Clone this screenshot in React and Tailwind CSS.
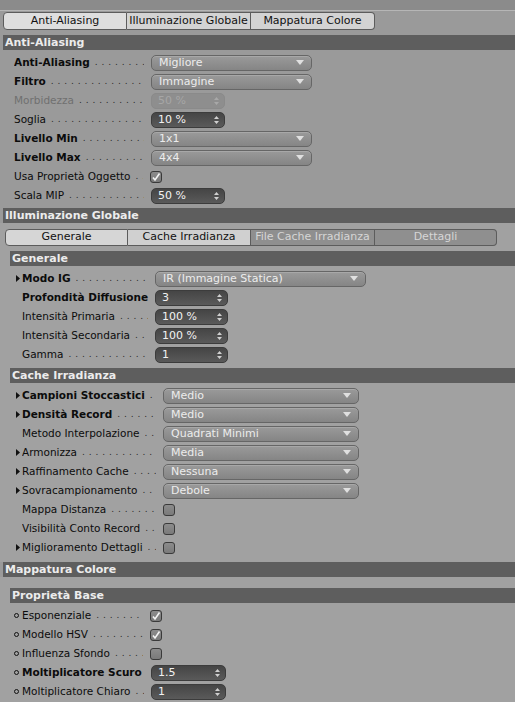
import React from "react";

const DOTS = ". . . . . . . . . . . . . . . . . . . . . . . . . . . . . . . . . . . . . . .";

function Header({ title, indent }) {
  return (
    <div
      className={
        "h-[15px] bg-[#5e5e5e] text-[#ececec] font-bold text-[11px] leading-[15px] pl-[2px] " +
        (indent ? "ml-[10px]" : "ml-[3px]")
      }
    >
      {title}
    </div>
  );
}

function Marker({ type }) {
  if (type === "tri") {
    return (
      <span className="w-[8px] flex items-center justify-start pl-[2px]">
        <svg width="4" height="7" viewBox="0 0 4 7">
          <path d="M0 0 L4 3.5 L0 7 Z" fill="#111" />
        </svg>
      </span>
    );
  }
  if (type === "circle") {
    return (
      <span className="w-[8px] flex items-center justify-start">
        <span className="w-[5px] h-[5px] rounded-full border border-[#111]" />
      </span>
    );
  }
  if (type === "none") return <span className="w-[8px]" />;
  return null;
}

function Row({ label, bold, muted, marker, width, children, noDots }) {
  return (
    <div className="h-[19px] flex items-center pl-[14px]">
      {marker && <Marker type={marker} />}
      <div className="flex items-center overflow-hidden shrink-0" style={{ width }}>
        <span
          className={
            "whitespace-nowrap text-[10.5px] " +
            (bold ? "font-bold " : "") +
            (muted ? "text-[#707070]" : "text-[#0c0c0c]")
          }
        >
          {label}
        </span>
        {!noDots && (
          <span className="flex-1 overflow-hidden whitespace-nowrap text-[9px] text-[#2a2a2a] ml-[5px] mr-[7px] tracking-[0.5px]">
            {DOTS}
          </span>
        )}
      </div>
      {children}
    </div>
  );
}

function Dropdown({ value, w }) {
  return (
    <div
      className={
        "h-[16px] rounded-[5px] border border-[#666] bg-gradient-to-b from-[#9a9a9a] to-[#858585] shadow-[inset_0_1px_0_#a8a8a8] flex items-center justify-between pl-[7px] pr-[7px] " +
        w
      }
    >
      <span className="text-[11px] text-[#ececec] whitespace-nowrap leading-[14px]">{value}</span>
      <svg width="8" height="5" viewBox="0 0 8 5">
        <path d="M0 0 L8 0 L4 5 Z" fill="#e0e0e0" />
      </svg>
    </div>
  );
}

function Spin({ value, w, disabled }) {
  return (
    <div
      className={
        "h-[16px] rounded-[5px] border flex items-center justify-between pl-[6px] pr-[5px] " +
        (disabled
          ? "border-[#8a8a8a] bg-[#8e8e8e] "
          : "border-[#3c3c3c] bg-gradient-to-b from-[#454545] to-[#5a5a5a] ") +
        w
      }
    >
      <span
        className={
          "text-[11px] whitespace-nowrap leading-[14px] " +
          (disabled ? "text-[#a6a6a6]" : "text-[#f2f2f2]")
        }
      >
        {value}
      </span>
      <svg width="5" height="8" viewBox="0 0 5 8">
        <path d="M0 3 L5 3 L2.5 0 Z M0 5 L5 5 L2.5 8 Z" fill={disabled ? "#a8a8a8" : "#d0d0d0"} />
      </svg>
    </div>
  );
}

function Check({ checked }) {
  return (
    <div className="w-[12px] h-[12px] rounded-[3px] border border-[#3a3a3a] bg-gradient-to-b from-[#8c8c8c] to-[#7a7a7a] flex items-center justify-center">
      {checked && (
        <svg width="10" height="10" viewBox="0 0 10 10">
          <path d="M2 5.5 L4 8 L8.5 1.5" stroke="#f4f4f4" strokeWidth="1.6" fill="none" />
        </svg>
      )}
    </div>
  );
}

export default function App() {
  return (
    <div className="w-[515px] h-[702px] overflow-hidden bg-[#9a9a9a] font-['DejaVu_Sans',sans-serif]">
      <div className="h-[11px] bg-[#8b8b8b] border-b border-[#b6b6b6]" />

      {/* main tabs */}
      <div className="flex pl-[3px] h-[18px] mt-[1px]">
        <div className="w-[124px] bg-[#dedede] border border-[#5c5c5c] rounded-l-[4px] text-[11px] text-[#111] flex items-center justify-center">
          Anti-Aliasing
        </div>
        <div className="w-[124px] bg-[#d3d3d3] border-y border-r border-[#5c5c5c] text-[11px] text-[#111] flex items-center justify-center">
          Illuminazione Globale
        </div>
        <div className="w-[124px] bg-[#d3d3d3] border-y border-r border-[#5c5c5c] rounded-r-[4px] text-[11px] text-[#111] flex items-center justify-center">
          Mappatura Colore
        </div>
      </div>

      <div className="mt-[5px]">
        <Header title="Anti-Aliasing" />
      </div>
      <div className="pt-[3px]">
        <Row label="Anti-Aliasing" bold width={137}>
          <Dropdown value="Migliore" w="w-[161px]" />
        </Row>
        <Row label="Filtro" bold width={137}>
          <Dropdown value="Immagine" w="w-[161px]" />
        </Row>
        <Row label="Morbidezza" muted width={137}>
          <Spin value="50 %" w="w-[74px]" disabled />
        </Row>
        <Row label="Soglia" width={137}>
          <Spin value="10 %" w="w-[74px]" />
        </Row>
        <Row label="Livello Min" bold width={137}>
          <Dropdown value="1x1" w="w-[161px]" />
        </Row>
        <Row label="Livello Max" bold width={137}>
          <Dropdown value="4x4" w="w-[161px]" />
        </Row>
        <Row label="Usa Proprietà Oggetto" width={136}>
          <Check checked />
        </Row>
        <Row label="Scala MIP" width={137}>
          <Spin value="50 %" w="w-[74px]" />
        </Row>
      </div>

      <div className="mt-[3px]">
        <Header title="Illuminazione Globale" />
      </div>
      <div className="bg-[#a1a1a1] pb-[5px]">
        {/* sub tabs */}
        <div className="flex pl-[5px] pt-[6px] h-[23px]">
          <div className="w-[123px] bg-[#d6d6d6] border border-[#5c5c5c] rounded-l-[4px] text-[11px] text-[#111] flex items-center justify-center">
            Generale
          </div>
          <div className="w-[123px] bg-[#d0d0d0] border-y border-r border-[#5c5c5c] text-[11px] text-[#111] flex items-center justify-center">
            Cache Irradianza
          </div>
          <div className="w-[124px] bg-[#8f8f8f] border-y border-r border-[#5c5c5c] text-[11px] text-[#d6d6d6] flex items-center justify-center">
            File Cache Irradianza
          </div>
          <div className="w-[122px] bg-[#8f8f8f] border-y border-r border-[#5c5c5c] rounded-r-[4px] text-[11px] text-[#d6d6d6] flex items-center justify-center">
            Dettagli
          </div>
        </div>

        <div className="mt-[5px]">
          <Header title="Generale" indent />
        </div>
        <div className="pt-[3px]">
          <Row label="Modo IG" bold marker="tri" width={133}>
            <Dropdown value="IR (Immagine Statica)" w="w-[211px]" />
          </Row>
          <Row label="Profondità Diffusione" bold marker="none" width={133} noDots>
            <Spin value="3" w="w-[73px]" />
          </Row>
          <Row label="Intensità Primaria" marker="none" width={133}>
            <Spin value="100 %" w="w-[73px]" />
          </Row>
          <Row label="Intensità Secondaria" marker="none" width={133}>
            <Spin value="100 %" w="w-[73px]" />
          </Row>
          <Row label="Gamma" marker="none" width={133}>
            <Spin value="1" w="w-[73px]" />
          </Row>
        </div>

        <div className="mt-[4px]">
          <Header title="Cache Irradianza" indent />
        </div>
        <div className="pt-[3px]">
          <Row label="Campioni Stoccastici" bold marker="tri" width={141}>
            <Dropdown value="Medio" w="w-[196px]" />
          </Row>
          <Row label="Densità Record" bold marker="tri" width={141}>
            <Dropdown value="Medio" w="w-[196px]" />
          </Row>
          <Row label="Metodo Interpolazione" marker="none" width={141}>
            <Dropdown value="Quadrati Minimi" w="w-[196px]" />
          </Row>
          <Row label="Armonizza" marker="tri" width={141}>
            <Dropdown value="Media" w="w-[196px]" />
          </Row>
          <Row label="Raffinamento Cache" marker="tri" width={141}>
            <Dropdown value="Nessuna" w="w-[196px]" />
          </Row>
          <Row label="Sovracampionamento" marker="tri" width={141}>
            <Dropdown value="Debole" w="w-[196px]" />
          </Row>
          <Row label="Mappa Distanza" marker="none" width={141}>
            <Check />
          </Row>
          <Row label="Visibilità Conto Record" marker="none" width={141}>
            <Check />
          </Row>
          <Row label="Miglioramento Dettagli" marker="tri" width={141}>
            <Check />
          </Row>
        </div>
      </div>

      <Header title="Mappatura Colore" />
      <div className="bg-[#a1a1a1] pt-[11px] h-[200px]">
        <Header title="Proprietà Base" indent />
        <div className="pt-[3px]">
          <Row label="Esponenziale" marker="circle" width={128}>
            <Check checked />
          </Row>
          <Row label="Modello HSV" marker="circle" width={128}>
            <Check checked />
          </Row>
          <Row label="Influenza Sfondo" marker="circle" width={128}>
            <Check />
          </Row>
          <Row label="Moltiplicatore Scuro" bold marker="circle" width={129} noDots>
            <Spin value="1.5" w="w-[75px]" />
          </Row>
          <Row label="Moltiplicatore Chiaro" marker="circle" width={129}>
            <Spin value="1" w="w-[75px]" />
          </Row>
        </div>
      </div>
    </div>
  );
}
